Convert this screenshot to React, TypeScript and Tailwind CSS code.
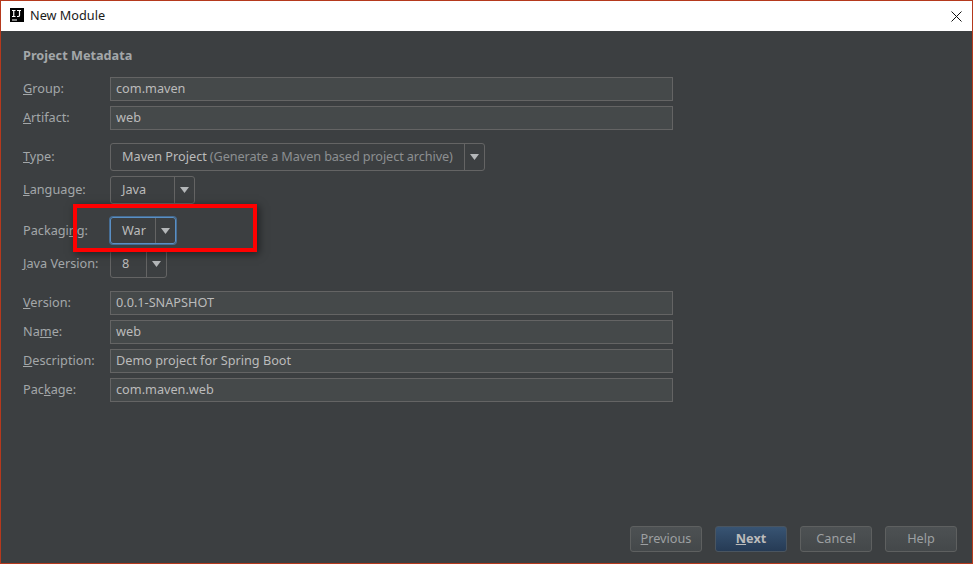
import type {ReactNode} from "react";

const Label = ({children}: {children: ReactNode}) => (
  <label className="w-[87px] shrink-0 text-[12.7px] text-[#a3a7a9]">{children}</label>
);

const Field = ({label, value}: {label: ReactNode; value: string}) => (
  <div className="flex flex-row items-center">
    <Label>{label}</Label>
    <div className="flex h-[24px] w-[563px] items-center border border-[#646464] bg-[#45494a] pl-[5px] text-[12.7px] text-[#bbbbbb]">
      {value}
    </div>
  </div>
);

const Combo = ({
  label,
  value,
  hint,
  textWidth,
  height = "h-[28px]",
  focused = false,
}: {
  label: ReactNode;
  value: string;
  hint?: string;
  textWidth: string;
  height?: string;
  focused?: boolean;
}) => (
  <div className="flex flex-row items-center">
    <Label>{label}</Label>
    <div
      className={`flex ${height} flex-row items-stretch rounded-[3px] border ${
        focused ? "border-[#5a8fc4] shadow-[0_0_0_1px_#466d94]" : "border-[#646464]"
      }`}
    >
      <div className={`flex ${textWidth} items-center whitespace-nowrap pl-[11px] text-[12.7px] text-[#bbbbbb]`}>
        {value}
        {hint && <span className="ml-[3px] tracking-[-0.1px] text-[#8c8f91]">{hint}</span>}
      </div>
      <div className="flex w-[20px] items-center justify-center border-l border-[#646464]">
        <svg height="6" viewBox="0 0 9 6" width="9">
          <path d="M0 0H9L4.5 6Z" fill="#b4b7b9" />
        </svg>
      </div>
    </div>
  </div>
);

const Button = ({children, primary = false}: {children: ReactNode; primary?: boolean}) => (
  <button
    className={`h-[26px] w-[72px] rounded-[3px] border text-[12.7px] ${
      primary
        ? "border-[#4a5560] bg-gradient-to-b from-[#385473] to-[#263b55] font-bold text-[#bbbbbb]"
        : "border-[#5e6060] bg-gradient-to-b from-[#4d5153] to-[#44484a] text-[#9da0a2]"
    }`}
  >
    {children}
  </button>
);

export default function App() {
  return (
    <div
      className="relative flex h-[564px] w-[973px] flex-col overflow-hidden border border-[#b5391d] bg-[#3c3f41]"
      style={{fontFamily: '"Noto Sans", "Open Sans", sans-serif'}}
    >
      <header className="flex h-[30px] shrink-0 flex-row items-center justify-between bg-white pl-[9px] pr-[10px]">
        <div className="flex flex-row items-center gap-[6px]">
          <div className="relative h-[14px] w-[14px] -translate-y-px bg-black">
            <svg className="absolute left-0 top-0" height="14" viewBox="0 0 14 14" width="14">
              <path d="M2 2.5H5.5M3.75 2.5V8.5M2 8.5H5.5M7 2.5H11M9.5 2.5V7.5Q9.5 8.5 8.2 8.5H7M2 12H7" fill="none" stroke="#fff" strokeWidth="1.2" />
            </svg>
          </div>
          <span className="text-[12.7px] text-[#1a1a1a]">New Module</span>
        </div>
        <svg height="11" viewBox="0 0 11 11" width="11">
          <path d="M0.5 0.5L10.5 10.5M10.5 0.5L0.5 10.5" stroke="#111" />
        </svg>
      </header>

      <main className="flex flex-1 flex-col pl-[22px] pt-[14px]">
        <h1 className="mb-[12px] text-[12.7px] font-bold leading-[20px] text-[#a3a7a9]">Project Metadata</h1>
        <div className="flex flex-col gap-[5px]">
          <Field label={<><u>G</u>roup:</>} value="com.maven" />
          <Field label={<><u>A</u>rtifact:</>} value="web" />
        </div>
        <div className="mt-[13px] flex flex-col gap-[5px]">
          <Combo hint="(Generate a Maven based project archive)" label={<><u>T</u>ype:</>} textWidth="w-[353px]" value="Maven Project" />
          <Combo label={<><u>L</u>anguage:</>} textWidth="w-[63px]" value="Java" />
        </div>
        <div className="mt-[13px] flex flex-col gap-[6px]">
          <Combo focused height="h-[27px]" label={<>Packagi<u>n</u>g:</>} textWidth="w-[44px]" value="War" />
          <Combo label={<><u>J</u>ava Version:</>} textWidth="w-[35px]" value="8" />
        </div>
        <div className="mt-[13px] flex flex-col gap-[5px]">
          <Field label={<><u>V</u>ersion:</>} value="0.0.1-SNAPSHOT" />
          <Field label={<>Na<u>m</u>e:</>} value="web" />
          <Field label={<><u>D</u>escription:</>} value="Demo project for Spring Boot" />
          <Field label={<>Pac<u>k</u>age:</>} value="com.maven.web" />
        </div>
      </main>

      <footer className="flex flex-row justify-end gap-[13px] pb-[11px] pr-[15px]">
        <Button><u>P</u>revious</Button>
        <Button primary><u>N</u>ext</Button>
        <Button>Cancel</Button>
        <Button>Help</Button>
      </footer>

      {/* red annotation drawn over the screenshot */}
      <div className="absolute left-[72px] top-[203px] h-[48px] w-[184px] border-4 border-[#ff0000] shadow-[2px_2px_8px_rgba(0,0,0,0.5)]" />
    </div>
  );
}
